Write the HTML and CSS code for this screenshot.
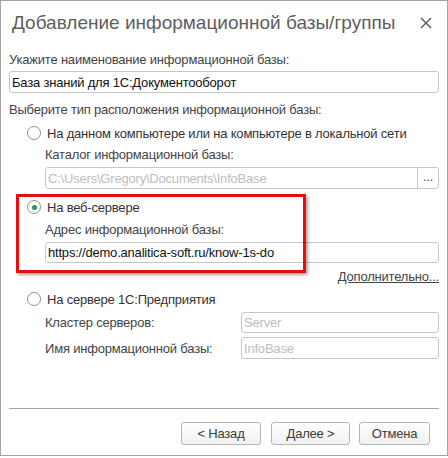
FILE: index.html
```html
<!DOCTYPE html>
<html lang="ru">
<head>
<meta charset="utf-8">
<link rel="stylesheet" href="styles.css">
</head>
<body>
<div class="window">
  <div class="titlebar">
    <div class="title">Добавление информационной базы/группы</div>
    <svg class="close" width="12" height="12" viewBox="0 0 12 12"><path d="M1 1 L11 11 M11 1 L1 11" stroke="#555" stroke-width="1.4" fill="none"/></svg>
  </div>
  <div class="content">
    <div class="label l1">Укажите наименование информационной базы:</div>
    <div class="field f1"><span class="val">База знаний для 1С:Документооборот</span></div>
    <div class="label l2">Выберите тип расположения информационной базы:</div>

    <div class="radio-row r1"><span class="radio"></span><span class="rtext">На данном компьютере или на компьютере в локальной сети</span></div>
    <div class="sub">
      <div class="label s-label m6">Каталог информационной базы:</div>
      <div class="field f2 disabled"><span class="val">C:\Users\Gregory\Documents\InfoBase</span><span class="dots">...</span></div>
    </div>

    <div class="radio-row r2"><span class="radio checked"></span><span class="rtext">На веб-сервере</span></div>
    <div class="sub">
      <div class="label s-label m7">Адрес информационной базы:</div>
      <div class="field f3"><span class="val">https://demo.analitica-soft.ru/know-1s-do</span></div>
    </div>
    <div class="more"><span class="link">Дополнительно...</span></div>

    <div class="radio-row r3"><span class="radio"></span><span class="rtext">На сервере 1С:Предприятия</span></div>
    <div class="sub grid">
      <div class="label">Кластер серверов:</div>
      <div class="field small disabled"><span class="val">Server</span></div>
      <div class="label">Имя информационной базы:</div>
      <div class="field small tall disabled"><span class="val">InfoBase</span></div>
    </div>
  </div>
  <div class="footer">
    <div class="sep"></div>
    <div class="buttons">
      <div class="btn b-back">&lt; Назад</div>
      <div class="btn b-next">Далее &gt;</div>
      <div class="btn b-cancel">Отмена</div>
    </div>
  </div>
  <div class="highlight"></div>
</div>
</body>
</html>
```
FILE: styles.css
```css
* { box-sizing: border-box; }
html, body { margin: 0; padding: 0; background: #fff; }
body {
  font-family: "Liberation Sans", Arial, sans-serif;
  font-size: 13px;
  letter-spacing: -0.2px;
  color: #444;
}
.window {
  position: relative;
  width: 448px;
  height: 456px;
  border: 1px solid #a3a3a3;
  display: flex;
  flex-direction: column;
  background: #fff;
}
.titlebar {
  height: 44px;
  display: flex;
  align-items: center;
  justify-content: space-between;
  padding: 0 15px 0 11px;
}
.title {
  font-size: 19px;
  letter-spacing: 0;
  color: #5e5e5e;
}
.close { display: block; margin-top: 0; }
.content {
  flex: 1;
  padding: 0 8px 0 8px;
}
.label {
  height: 16px;
  line-height: 16px;
  white-space: nowrap;
}
.l1 { margin-top: 7px; }
.l2 { margin-top: 9px; }
.field {
  height: 22px;
  border: 1px solid #c6c6c6;
  border-radius: 3px;
  display: flex;
  align-items: center;
  padding-left: 2px;
  color: #111;
  background: #fff;
}
.f1 { margin-top: 3px; }
.disabled { color: #bdbdbd; }
.field .val { flex: 1; white-space: nowrap; overflow: hidden; }
.f2 { margin-top: 4px; }
.f3 { margin-top: 4px; height: 21px; }
.dots {
  width: 21px;
  height: 100%;
  border-left: 1px solid #c6c6c6;
  color: #444;
  text-align: center;
  line-height: 18px;
}
.radio-row {
  height: 16px;
  display: flex;
  align-items: center;
  padding-left: 18px;
  color: #333;
}
.r1 { margin-top: 7px; }
.r2 { margin-top: 10px; }
.r3 { margin-top: 6px; }
.radio {
  width: 14px;
  height: 14px;
  border: 1px solid #8f8f8f;
  border-radius: 50%;
  margin-right: 6px;
  display: flex;
  align-items: center;
  justify-content: center;
  background: #fff;
}
.radio.checked::after {
  content: "";
  width: 5px;
  height: 5px;
  border-radius: 50%;
  background: #1e9a48;
}
.sub { padding-left: 36px; }
.s-label.m6 { margin-top: 6px; }
.s-label.m7 { margin-top: 7px; }
.more {
  margin-top: 6px;
  height: 16px;
  line-height: 16px;
  text-align: right;
}
.link { text-decoration: underline; color: #444; }
.grid {
  display: grid;
  grid-template-columns: 196px 1fr;
  row-gap: 4px;
  align-items: center;
  margin-top: 5px;
}
.grid .label { line-height: 21px; height: 21px; }
.field.small { height: 21px; }
.field.small.tall { height: 22px; }
.footer {
  padding: 0 0 10px 8px;
}
.sep {
  height: 1px;
  background: #a6a6a6;
  margin-right: 8px;
}
.buttons {
  margin-top: 13px;
  display: flex;
  justify-content: flex-end;
  gap: 9px;
  padding-right: 17px;
}
.btn {
  height: 23px;
  border: 1px solid #b5b5b5;
  border-radius: 3px;
  background: linear-gradient(#ffffff, #f1f1f1);
  text-align: center;
  line-height: 21px;
  color: #3a3a3a;
}
.b-back { width: 80px; margin-right: 1px; }
.b-next { width: 79px; }
.b-cancel { width: 71px; }
.highlight {
  position: absolute;
  left: 15px;
  top: 193px;
  width: 290px;
  height: 79px;
  border: 3px solid #e60f0f;
  box-shadow: 2px 2px 3px rgba(0, 0, 0, 0.35);
  pointer-events: none;
}
```
